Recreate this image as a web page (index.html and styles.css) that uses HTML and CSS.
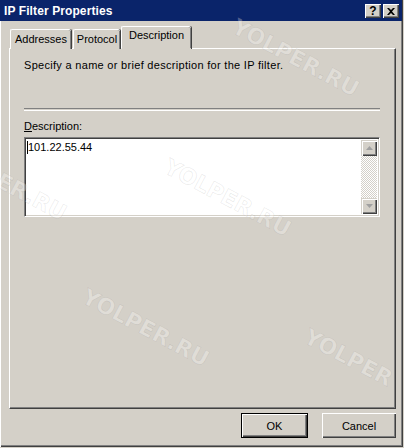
FILE: index.html
```html
<!DOCTYPE html>
<html>
<head>
<meta charset="utf-8">
<link rel="stylesheet" href="styles.css">
</head>
<body>
<div class="window">
  <div class="titlebar">
    <span class="title">IP Filter Properties</span>
    <div class="tbtns">
      <span class="tbtn">?</span>
      <span class="tbtn">
        <svg width="8" height="7" viewBox="0 0 8 7"><path d="M0 0h2l2 2 2-2h2L5 3.5 8 7H6L4 5 2 7H0l3-3.5z" fill="#000"/></svg>
      </span>
    </div>
  </div>
  <div class="body">
    <div class="tabs">
      <div class="tab t1">Addresses</div>
      <div class="tab t2">Protocol</div>
      <div class="tab t3 active">Description</div>
    </div>
    <div class="panel">
      <p class="intro">Specify a name or brief description for the IP filter.</p>
      <div class="sep"></div>
      <label class="lbl"><u>D</u>escription:</label>
      <div class="textbox">
        <div class="tbtext">101.22.55.44</div>
        <div class="scroll">
          <div class="sbtn"><svg width="7" height="4" viewBox="0 0 7 4"><path d="M3.5 0L7 4H0z" fill="#a0a0a0"/></svg></div>
          <div class="track"></div>
          <div class="sbtn"><svg width="7" height="4" viewBox="0 0 7 4"><path d="M0 0h7L3.5 4z" fill="#a0a0a0"/></svg></div>
        </div>
      </div>
    </div>
    <div class="footer">
      <div class="btn default"><span>OK</span></div>
      <div class="btn"><span>Cancel</span></div>
    </div>
  </div>
  <span class="wm wm1">YOLPER.RU</span>
  <span class="wm wm2">YOLPER.RU</span>
  <span class="wm wm3">ER.RU</span>
  <span class="wm wm4">YOLPER.RU</span>
  <span class="wm wm5">YOLPER</span>
</div>
</body>
</html>
```
FILE: styles.css
```css
html, body {
  margin: 0;
  padding: 0;
  background: #d4d0c8;
}
body {
  width: 404px;
  height: 448px;
  overflow: hidden;
  font-family: "Liberation Sans", Arial, sans-serif;
  font-size: 11px;
  color: #000;
}
.window {
  position: relative;
  width: 403px;
  height: 447px;
  background: #d4d0c8;
  box-shadow: inset 1px 0 #ffffff, inset -1px -1px #404040, inset -2px -2px #808080;
  display: flex;
  flex-direction: column;
  overflow: hidden;
}
.titlebar {
  height: 21px;
  background: #0a246a;
  display: flex;
  align-items: center;
  justify-content: space-between;
  padding: 0 3px 0 4px;
  margin-right: 1px;
}
.title {
  color: #fff;
  font-weight: bold;
  font-size: 12px;
  letter-spacing: 0.1px;
}
.tbtns {
  display: flex;
  gap: 2px;
  padding-top: 1px;
}
.tbtn {
  width: 16px;
  height: 14px;
  box-sizing: border-box;
  background: #d4d0c8;
  box-shadow: inset 1px 1px #fff, inset -1px -1px #404040, inset -2px -2px #808080;
  display: flex;
  align-items: center;
  justify-content: center;
  font-weight: bold;
  font-size: 12px;
  line-height: 12px;
  color: #000;
}
.body {
  flex: 1;
  display: flex;
  flex-direction: column;
  padding: 5px 7px 0 9px;
}
.tabs {
  display: flex;
  align-items: flex-end;
  height: 23px;
  padding-left: 1px;
  position: relative;
  z-index: 2;
  margin-bottom: -1px;
}
.tab {
  height: 20px;
  box-sizing: border-box;
  padding-top: 3px;
  text-align: center;
  border-top: 1px solid #fff;
  border-left: 1px solid #fff;
  border-radius: 2px 2px 0 0;
  box-shadow: inset -1px 0 #808080, 1px 0 #404040;
  margin-right: 2px;
  background: #d4d0c8;
  line-height: 13px;
}
.t1 { width: 61px; }
.t2 { width: 47px; }
.t3 { width: 70px; }
.tab.active {
  height: 23px;
  padding-top: 2px;
  margin-left: -1px;
  margin-right: 0;
  border-bottom: 1px solid #d4d0c8;
}
.panel {
  height: 361px;
  box-sizing: border-box;
  border-top: 1px solid #fff;
  border-left: 1px solid #fff;
  border-right: 1px solid #404040;
  border-bottom: 1px solid #404040;
  box-shadow: inset -1px -1px #808080;
  padding: 10px 15px 0 14px;
  position: relative;
  z-index: 1;
}
.intro {
  margin: 0;
  line-height: 13px;
  letter-spacing: 0.3px;
}
.sep {
  margin-top: 36px;
  height: 1px;
  border-top: 1px solid #808080;
  border-bottom: 1px solid #fff;
}
.lbl {
  display: block;
  margin-top: 9px;
  line-height: 13px;
}
.textbox {
  margin-top: 4px;
  height: 80px;
  box-sizing: border-box;
  background: #fff;
  border-top: 1px solid #808080;
  border-left: 1px solid #808080;
  border-right: 1px solid #fff;
  border-bottom: 1px solid #fff;
  box-shadow: inset 1px 1px #404040, inset -1px -1px #d4d0c8;
  display: flex;
  padding: 2px;
}
.tbtext {
  flex: 1;
  padding: 1px 0 0 1px;
  line-height: 13px;
  height: 13px;
  position: relative;
}
.tbtext::before {
  content: "";
  position: absolute;
  left: 0;
  top: 1px;
  width: 1px;
  height: 13px;
  background: #000;
}
.scroll {
  width: 16px;
  display: flex;
  flex-direction: column;
}
.sbtn {
  height: 16px;
  box-sizing: border-box;
  background: #d4d0c8;
  box-shadow: inset 1px 1px #d4d0c8, inset 2px 2px #fff, inset -1px -1px #404040, inset -2px -2px #808080;
  display: flex;
  align-items: center;
  justify-content: center;
}
.track {
  flex: 1;
  background-color: #fff;
  background-image:
    linear-gradient(45deg, #d4d0c8 25%, transparent 25%, transparent 75%, #d4d0c8 75%),
    linear-gradient(45deg, #d4d0c8 25%, transparent 25%, transparent 75%, #d4d0c8 75%);
  background-size: 2px 2px;
  background-position: 0 0, 1px 1px;
}
.footer {
  display: flex;
  justify-content: flex-end;
  gap: 14px;
  padding-top: 4px;
}
.btn {
  width: 74px;
  height: 25px;
  box-sizing: border-box;
  background: #d4d0c8;
  box-shadow: inset 1px 1px #fff, inset -1px -1px #404040, inset -2px -2px #808080;
  display: flex;
  align-items: center;
  justify-content: center;
  font-size: 11px;
}
.btn.default {
  width: 67px;
  border: 1px solid #000;
}
.wm {
  position: absolute;
  font-family: "DejaVu Sans", sans-serif;
  font-weight: bold;
  font-size: 22px;
  color: rgba(255, 255, 255, 0.28);
  -webkit-text-stroke: 0.6px rgba(120, 120, 120, 0.18);
  transform: rotate(28deg);
  transform-origin: left top;
  pointer-events: none;
  z-index: 5;
  white-space: nowrap;
}
.wm1 { left: 240px; top: 14px; }
.wm2 { left: 172px; top: 154px; }
.wm3 { left: 4px; top: 168px; }
.wm4 { left: 90px; top: 284px; }
.wm5 { left: 312px; top: 324px; }
```
